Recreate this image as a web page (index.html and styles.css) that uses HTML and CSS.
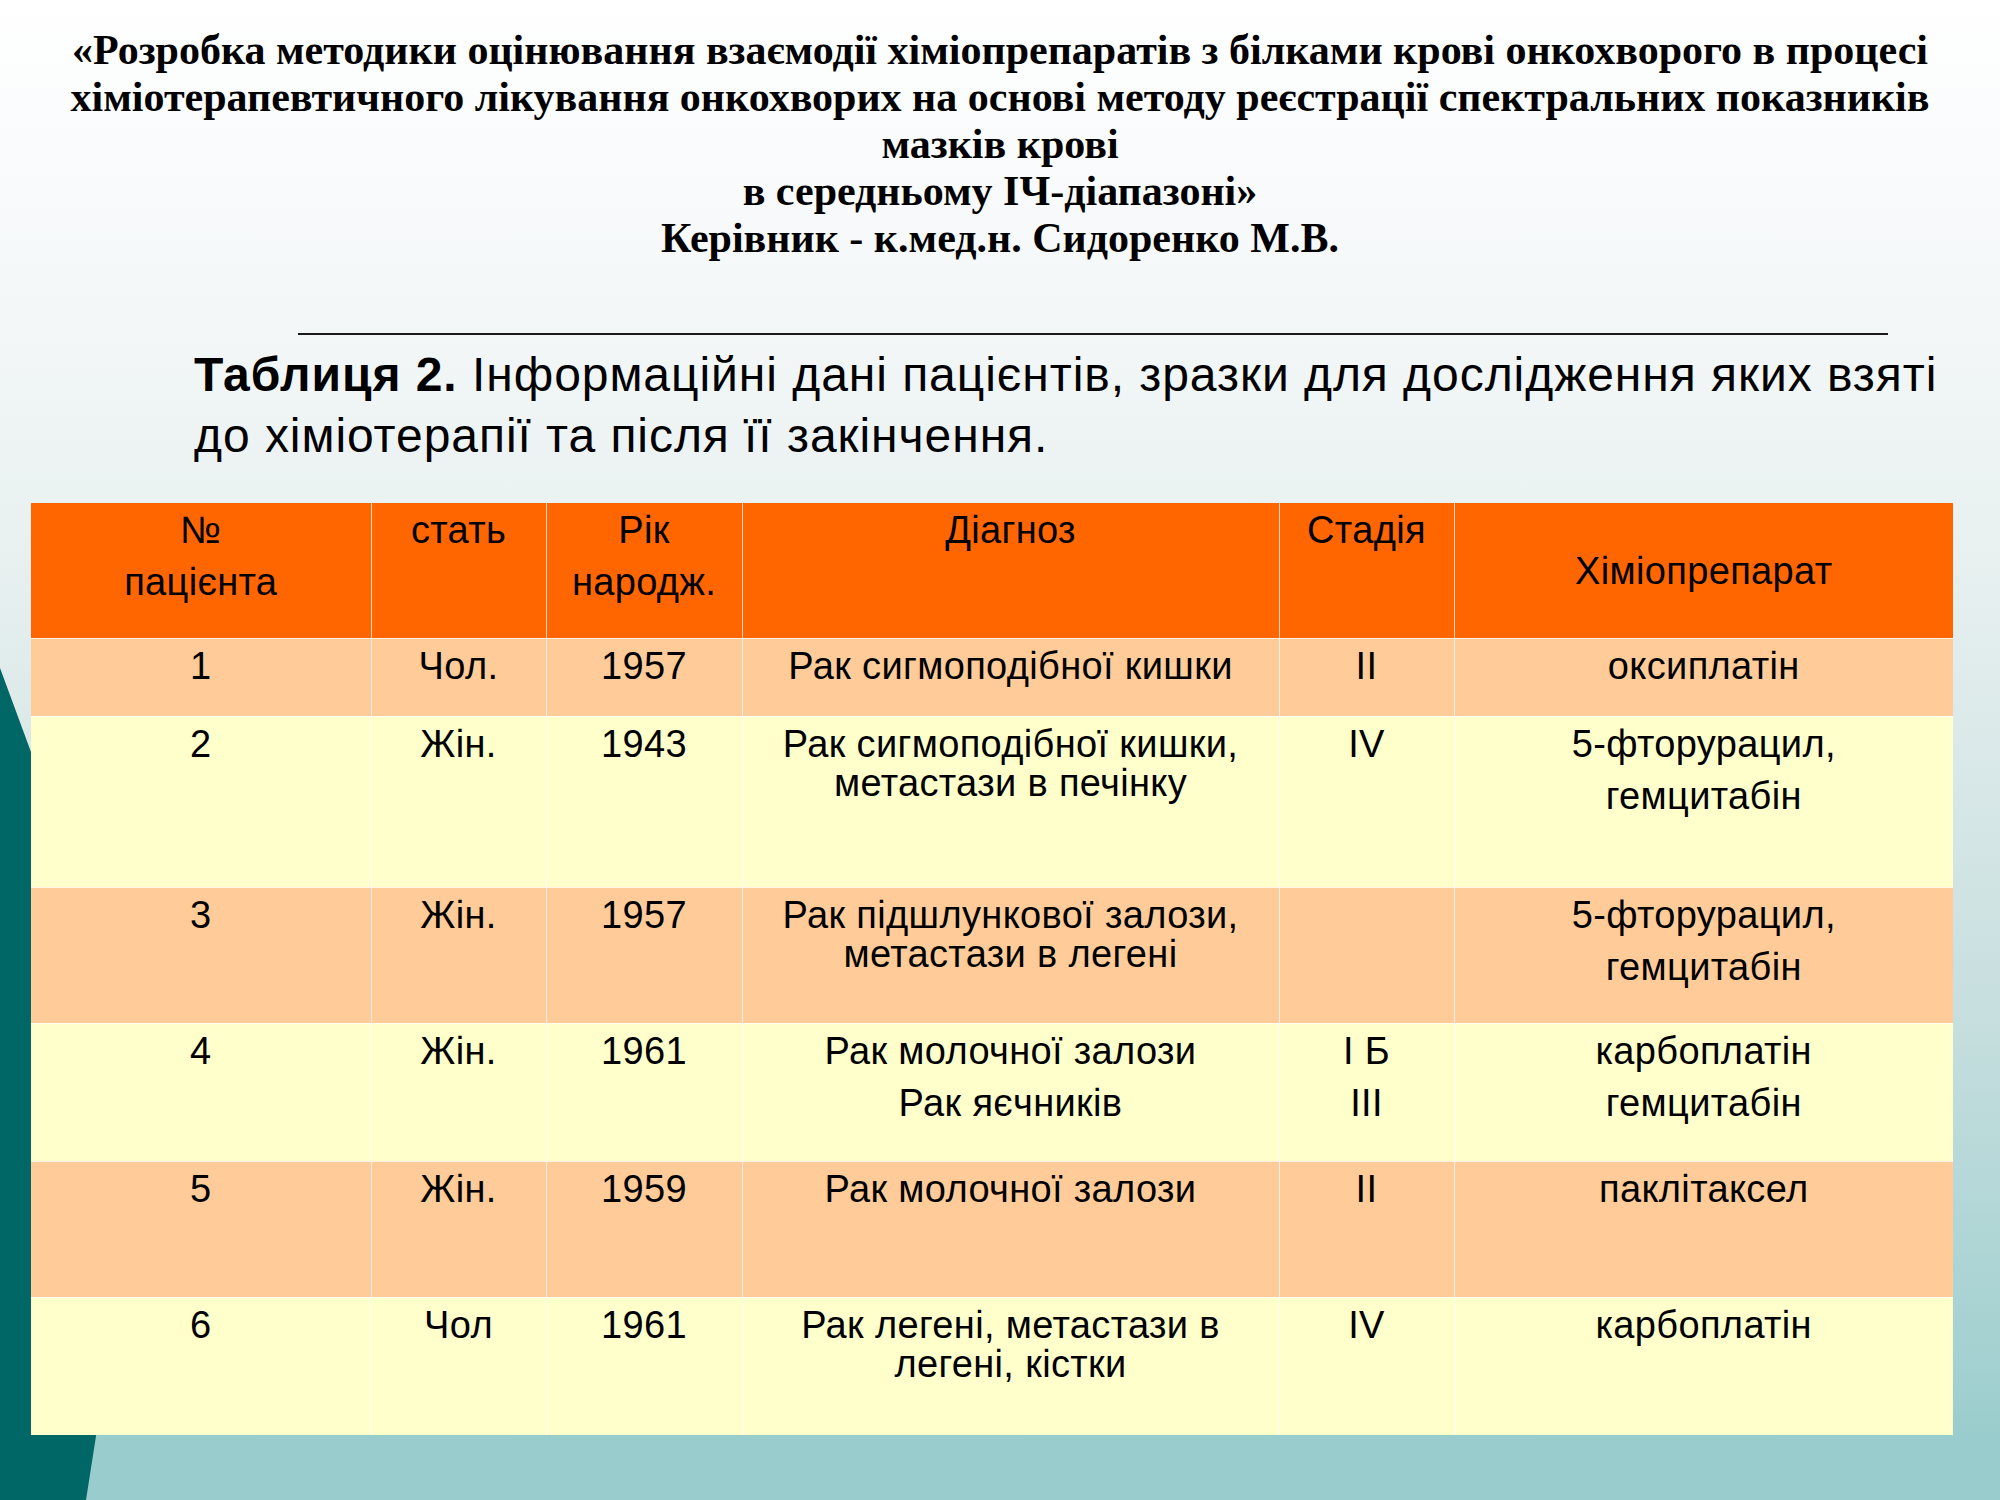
FILE: index.html
```html
<!DOCTYPE html>
<html lang="uk">
<head>
<meta charset="utf-8">
<title>Таблиця 2</title>
<link rel="stylesheet" href="styles.css">
</head>
<body>
<div class="slide">
  <svg class="deco" width="2000" height="1500" viewBox="0 0 2000 1500" aria-hidden="true">
    <path d="M0 668 L31 752 Q150 1100 96 1436 L86 1500 L0 1500 Z" fill="#006666"/>
  </svg>

  <header class="title">
    <div class="title-line">«Розробка методики оцінювання взаємодії хіміопрепаратів з білками крові онкохворого в процесі</div>
    <div class="title-line">хіміотерапевтичного лікування онкохворих на основі методу реєстрації спектральних показників</div>
    <div class="title-line">мазків крові</div>
    <div class="title-line">в середньому ІЧ-діапазоні»</div>
    <div class="title-line">Керівник - к.мед.н. Сидоренко М.В.</div>
  </header>

  <div class="rule"></div>

  <p class="caption"><b>Таблиця 2.</b> Інформаційні дані пацієнтів, зразки для дослідження яких взяті<br>до хіміотерапії та після її закінчення.</p>

  <table class="data">
    <colgroup>
      <col class="c1"><col class="c2"><col class="c3"><col class="c4"><col class="c5"><col class="c6">
    </colgroup>
    <thead>
      <tr class="head">
        <th>№<br>пацієнта</th>
        <th>стать</th>
        <th>Рік<br>народж.</th>
        <th>Діагноз</th>
        <th>Стадія</th>
        <th class="mid">Хіміопрепарат</th>
      </tr>
    </thead>
    <tbody>
      <tr class="odd r1">
        <td>1</td><td>Чол.</td><td>1957</td>
        <td class="diag">Рак сигмоподібної кишки</td>
        <td>ІІ</td><td>оксиплатін</td>
      </tr>
      <tr class="even r2">
        <td>2</td><td>Жін.</td><td>1943</td>
        <td class="diag">Рак сигмоподібної кишки,<br>метастази в печінку</td>
        <td>IV</td><td>5-фторурацил,<br>гемцитабін</td>
      </tr>
      <tr class="odd r3">
        <td>3</td><td>Жін.</td><td>1957</td>
        <td class="diag">Рак підшлункової залози,<br>метастази в легені</td>
        <td></td><td>5-фторурацил,<br>гемцитабін</td>
      </tr>
      <tr class="even r4">
        <td>4</td><td>Жін.</td><td>1961</td>
        <td>Рак молочної залози<br>Рак яєчників</td>
        <td>І Б<br>ІІІ</td><td>карбоплатін<br>гемцитабін</td>
      </tr>
      <tr class="odd r5">
        <td>5</td><td>Жін.</td><td>1959</td>
        <td>Рак молочної залози</td>
        <td>ІІ</td><td>паклітаксел</td>
      </tr>
      <tr class="even r6">
        <td>6</td><td>Чол</td><td>1961</td>
        <td class="diag">Рак легені, метастази в<br>легені, кістки</td>
        <td>IV</td><td>карбоплатін</td>
      </tr>
    </tbody>
  </table>
</div>
</body>
</html>
```

FILE: styles.css
```css
* { box-sizing: border-box; }

html, body {
  margin: 0;
  padding: 0;
}

body {
  width: 2000px;
  height: 1500px;
  overflow: hidden;
  color: #000;
}

.slide {
  position: relative;
  width: 2000px;
  height: 1500px;
  padding-top: 27px;
  background: linear-gradient(180deg,
    #ffffff 0px,
    #f5f8f9 280px,
    #e8f0f0 560px,
    #c8dfdf 1000px,
    #a2d0d0 1380px,
    #99cccc 1440px,
    #99cccc 1500px);
}

.deco {
  position: absolute;
  left: 0;
  top: 0;
  z-index: 0;
}

.title {
  position: relative;
  z-index: 1;
  font-family: "Liberation Serif", "Times New Roman", serif;
  font-weight: bold;
  font-size: 42px;
  line-height: 47px;
  text-align: center;
  white-space: nowrap;
}

.rule {
  position: relative;
  z-index: 1;
  margin: 71px 0 0 298px;
  width: 1590px;
  height: 2px;
  background: #1a1a1a;
}

.caption {
  position: relative;
  z-index: 1;
  margin: 9px 0 0 194px;
  font-family: "Liberation Sans", Arial, sans-serif;
  font-size: 48px;
  letter-spacing: 0.95px;
  line-height: 61px;
  white-space: nowrap;
}

.caption b { font-weight: bold; }

.data {
  position: relative;
  z-index: 1;
  margin: 37px 0 0 31px;
  width: 1922px;
  table-layout: fixed;
  border-collapse: collapse;
  font-family: "Liberation Sans", Arial, sans-serif;
  font-size: 38px;
  letter-spacing: 0.35px;
  line-height: 52px;
}

.c1 { width: 340px; }
.c2 { width: 175px; }
.c3 { width: 196px; }
.c4 { width: 537px; }
.c5 { width: 175px; }
.c6 { width: 499px; }

.data th,
.data td {
  padding: 1px 2px 0;
  text-align: center;
  vertical-align: top;
  font-weight: normal;
  border: 1px solid rgba(255, 255, 255, 0.75);
  border-top: 0;
  white-space: nowrap;
}

.data tr > :first-child { border-left: 0; }
.data tr > :last-child { border-right: 0; }
.data tbody tr:last-child td { border-bottom: 0; }

.data th.mid { vertical-align: middle; }

.head { background: #ff6600; height: 135px; }
.odd { background: #ffcc99; }
.even { background: #ffffcc; }

.r1 { height: 78px; }
.r2 { height: 171px; }
.r3 { height: 136px; }
.r4 { height: 138px; }
.r5 { height: 136px; }
.r6 { height: 138px; }

.data td.diag {
  line-height: 39px;
  padding-top: 8px;
}
```
